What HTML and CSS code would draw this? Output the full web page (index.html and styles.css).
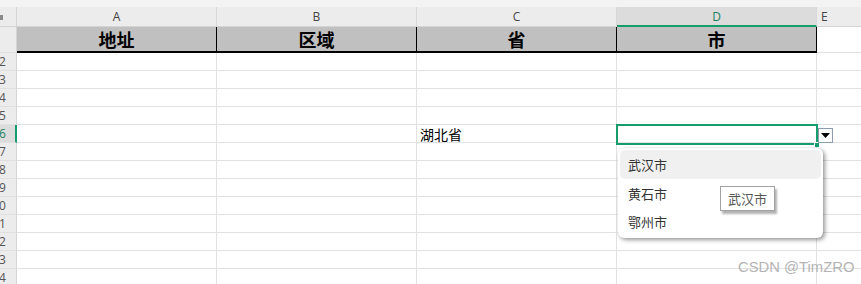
FILE: index.html
```html
<!DOCTYPE html>
<html lang="zh">
<head>
<meta charset="utf-8">
<link rel="stylesheet" href="styles.css">
</head>
<body>
<div class="sheet">
  <div class="topstrip"></div>
  <div class="grid">
    <div class="corner"><span class="corner-mark"></span></div>
    <div class="colhead">A</div>
    <div class="colhead">B</div>
    <div class="colhead">C</div>
    <div class="colhead sel">D</div>
    <div class="colhead last">E</div>

    <div class="rowhead r1"><span>1</span></div>
    <div class="hcell">地址</div>
    <div class="hcell">区域</div>
    <div class="hcell">省</div>
    <div class="hcell">市</div>
    <div class="cell last"></div>

    <div class="rowhead"><span>2</span></div><div class="cell"></div><div class="cell"></div><div class="cell"></div><div class="cell"></div><div class="cell last"></div>
    <div class="rowhead"><span>3</span></div><div class="cell"></div><div class="cell"></div><div class="cell"></div><div class="cell"></div><div class="cell last"></div>
    <div class="rowhead"><span>4</span></div><div class="cell"></div><div class="cell"></div><div class="cell"></div><div class="cell"></div><div class="cell last"></div>
    <div class="rowhead"><span>5</span></div><div class="cell"></div><div class="cell"></div><div class="cell"></div><div class="cell"></div><div class="cell last"></div>
    <div class="rowhead sel"><span>6</span></div><div class="cell"></div><div class="cell"></div><div class="cell text">湖北省</div><div class="cell"></div><div class="cell last"></div>
    <div class="rowhead"><span>7</span></div><div class="cell"></div><div class="cell"></div><div class="cell"></div><div class="cell"></div><div class="cell last"></div>
    <div class="rowhead"><span>8</span></div><div class="cell"></div><div class="cell"></div><div class="cell"></div><div class="cell"></div><div class="cell last"></div>
    <div class="rowhead"><span>9</span></div><div class="cell"></div><div class="cell"></div><div class="cell"></div><div class="cell"></div><div class="cell last"></div>
    <div class="rowhead"><span>0</span></div><div class="cell"></div><div class="cell"></div><div class="cell"></div><div class="cell"></div><div class="cell last"></div>
    <div class="rowhead"><span>1</span></div><div class="cell"></div><div class="cell"></div><div class="cell"></div><div class="cell"></div><div class="cell last"></div>
    <div class="rowhead"><span>2</span></div><div class="cell"></div><div class="cell"></div><div class="cell"></div><div class="cell"></div><div class="cell last"></div>
    <div class="rowhead"><span>3</span></div><div class="cell"></div><div class="cell"></div><div class="cell"></div><div class="cell"></div><div class="cell last"></div>
    <div class="rowhead"><span>4</span></div><div class="cell"></div><div class="cell"></div><div class="cell"></div><div class="cell"></div><div class="cell last"></div>
  </div>

  <div class="selbox"><span class="handle"></span></div>
  <div class="ddbtn"><svg width="9" height="5" viewBox="0 0 9 5"><path d="M0 0H9L4.5 5Z" fill="#000"/></svg></div>
  <div class="ddlist">
    <div class="dditem active">武汉市</div>
    <div class="dditem">黄石市</div>
    <div class="dditem">鄂州市</div>
  </div>
  <div class="tip">武汉市</div>
  <div class="watermark">CSDN @TimZRO</div>
</div>
</body>
</html>
```

FILE: styles.css
```css
html, body {
  margin: 0;
  padding: 0;
  background: #fff;
}
body {
  font-family: "Noto Sans CJK SC", "Noto Sans", sans-serif;
  width: 861px;
  height: 284px;
  overflow: hidden;
}
.sheet {
  position: relative;
  width: 861px;
  height: 284px;
  overflow: hidden;
}
.topstrip {
  height: 7px;
  background: #f3f3f3;
}
.grid {
  display: grid;
  grid-template-columns: 17px 200px 200px 200px 200px 44px;
  grid-template-rows: 20px 26px repeat(13, 18px);
}
.corner {
  background: #ececec;
  border-right: 1px solid #d4d4d4;
  border-bottom: 1px solid #d4d4d4;
  box-sizing: border-box;
  position: relative;
}
.corner-mark {
  position: absolute;
  left: 0;
  top: 8px;
  width: 3px;
  height: 5px;
  background: #8a8a8a;
}
.colhead {
  background: #ececec;
  border-right: 1px solid #d8d8d8;
  border-bottom: 1px solid #d4d4d4;
  box-sizing: border-box;
  font-family: "Open Sans", "Noto Sans", sans-serif;
  font-size: 12px;
  color: #444;
  display: flex;
  align-items: center;
  justify-content: center;
}
.colhead.sel {
  background: #dcdcdc;
  border-bottom: 2px solid #179c6b;
  color: #1a7f5a;
}
.colhead.last {
  border-right: none;
  justify-content: flex-start;
  padding-left: 4px;
}
.rowhead {
  background: #ececec;
  border-right: 1px solid #d4d4d4;
  border-bottom: 1px solid #e0e0e0;
  box-sizing: border-box;
  overflow: hidden;
  font-family: "Open Sans", "Noto Sans", sans-serif;
  font-size: 12px;
  color: #555;
  display: flex;
  align-items: center;
}
.rowhead span {
  margin-left: -1px;
  white-space: nowrap;
}
.rowhead.r1 span {
  color: #4aa3d8;
  margin-left: -5px;
}
.rowhead.sel {
  background: #dcdcdc;
  border-right: 2px solid #179c6b;
  color: #1a7f5a;
}
.hcell {
  background: #c0c0c0;
  border-right: 1px solid #000;
  border-bottom: 2px solid #000;
  box-sizing: border-box;
  font-family: "Noto Sans CJK SC", sans-serif;
  font-weight: 700;
  font-size: 18px;
  color: #000;
  display: flex;
  align-items: center;
  justify-content: center;
  line-height: 1;
}
.cell {
  border-right: 1px solid #e1e1e1;
  border-bottom: 1px solid #e1e1e1;
  box-sizing: border-box;
}
.cell.last {
  border-right: none;
}
.cell.text {
  font-family: "Noto Sans CJK SC", sans-serif;
  font-size: 14px;
  color: #000;
  padding-left: 3px;
  display: flex;
  align-items: center;
  line-height: 1;
}
.selbox {
  position: absolute;
  left: 616px;
  top: 124px;
  width: 202px;
  height: 21px;
  border: 2px solid #179c6b;
  box-sizing: border-box;
}
.handle {
  position: absolute;
  right: -3px;
  bottom: -4px;
  width: 4px;
  height: 4px;
  background: #179c6b;
  border: 1px solid #fff;
  border-right: none;
  border-bottom: none;
}
.ddbtn {
  position: absolute;
  left: 818px;
  top: 128px;
  width: 15px;
  height: 15px;
  border: 1px solid #8e9cb0;
  box-sizing: border-box;
  background: #fff;
  display: flex;
  align-items: center;
  justify-content: center;
}
.ddlist {
  position: absolute;
  left: 618px;
  top: 148px;
  width: 205px;
  height: 90px;
  background: #fff;
  border-radius: 6px;
  box-shadow: 2px 2px 4px rgba(0, 0, 0, 0.4), 0 0 1px rgba(0, 0, 0, 0.15);
  padding: 2px;
  box-sizing: border-box;
  display: flex;
  flex-direction: column;
}
.dditem {
  height: 29px;
  padding-left: 8px;
  display: flex;
  align-items: center;
  font-size: 13px;
  color: #333;
  border-radius: 5px;
}
.dditem.active {
  background: #f0f0f0;
}
.tip {
  position: absolute;
  left: 720px;
  top: 186px;
  width: 55px;
  height: 25px;
  box-sizing: border-box;
  border: 1px solid #a2a2a2;
  background: #fff;
  box-shadow: 2px 3px 2px rgba(0, 0, 0, 0.3);
  font-size: 13px;
  color: #555;
  display: flex;
  align-items: center;
  justify-content: center;
}
.watermark {
  position: absolute;
  left: 738px;
  top: 259px;
  font-family: "Liberation Sans", "Noto Sans", sans-serif;
  font-size: 14.8px;
  color: #b4b4b4;
}
```
